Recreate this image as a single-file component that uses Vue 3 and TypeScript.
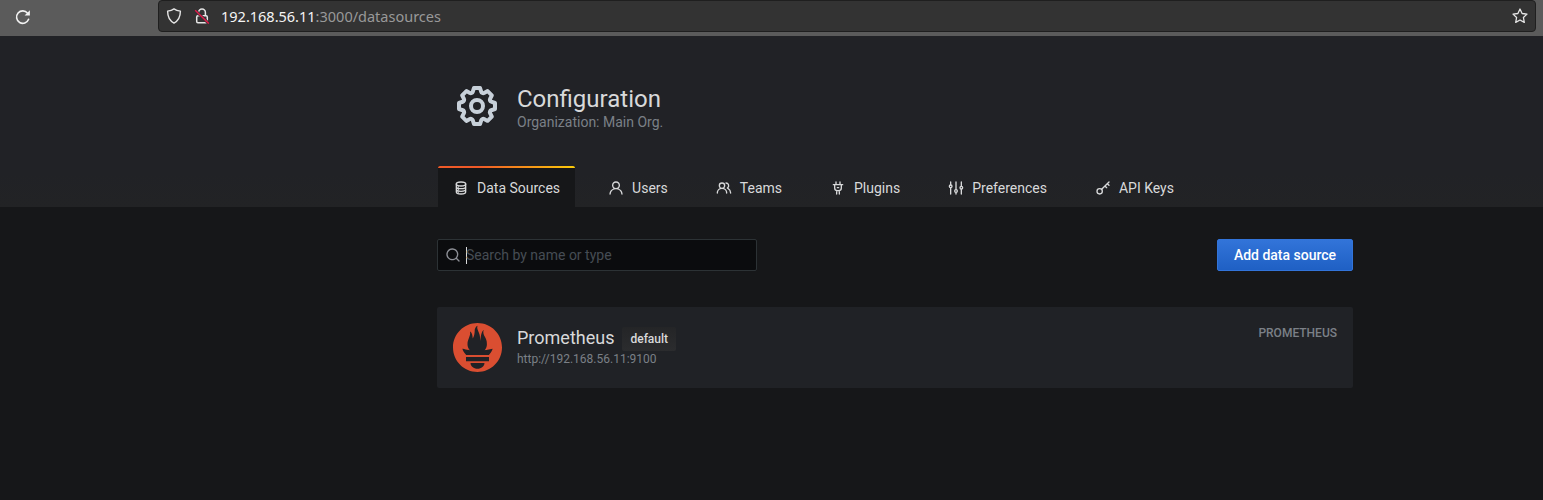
<script setup lang="ts">
interface Tab {
  label: string
  icon: string
  active?: boolean
}

const tabs: Tab[] = [
  { label: 'Data Sources', icon: 'database', active: true },
  { label: 'Users', icon: 'user' },
  { label: 'Teams', icon: 'users' },
  { label: 'Plugins', icon: 'plug' },
  { label: 'Preferences', icon: 'sliders' },
  { label: 'API Keys', icon: 'key' },
]
</script>

<template>
  <div class="window">
    <div class="toolbar">
      <svg class="reload" viewBox="0 0 16 16">
        <path d="M13.6 10.3A6.2 6.2 0 1 1 12.6 4.2" fill="none" stroke="#f2f2f2" stroke-width="1.6" stroke-linecap="round" />
        <path d="M14.9 1.2v5.3H9.6z" fill="#f2f2f2" />
      </svg>
      <div class="urlbar">
        <svg class="shield" viewBox="0 0 16 16">
          <path d="M8 .9C6.2 2.3 4 2.9 1.6 3.1c0 5.6 1.7 9.6 6.4 12 4.700-2.400 6.400-6.400 6.400-12C12 2.900 9.800 2.300 8 .9z" fill="none" stroke="#e6e6e6" stroke-width="1.400" stroke-linejoin="round" />
        </svg>
        <svg class="lock" viewBox="0 0 16 16">
          <path d="M4.600 7.300V4.400a3.400 3.400 0 0 1 6.800 0v2.900" fill="none" stroke="#e6e6e6" stroke-width="1.500" />
          <rect x="2.700" y="7.700" width="10.600" height="7" rx="1.200" fill="none" stroke="#e6e6e6" stroke-width="1.500" />
          <path d="M1.200 2.200 14.800 15.600" stroke="#333" stroke-width="3" />
          <path d="M1.200 2.200 14.800 15.600" stroke="#e31b4b" stroke-width="1.400" />
        </svg>
        <span class="url"><span class="host">192.168.56.11</span>:3000/datasources</span>
        <svg class="star" viewBox="0 0 16 16">
          <path d="M8 1l2.100 4.500 4.900.600-3.600 3.400.900 4.900L8 12l-4.300 2.400.9-4.900L1 6.100l4.900-.6z" fill="none" stroke="#e6e6e6" stroke-width="1.300" stroke-linejoin="round" />
        </svg>
      </div>
    </div>

    <header class="page-header">
      <div class="container">
        <div class="heading">
          <svg class="cog" viewBox="0 0 24 24">
            <path d="M21.320,9.550l-1.890-.630.890-1.780A1,1,0,0,0,20.130,6L18,3.870a1,1,0,0,0-1.150-.190l-1.780.890-.630-1.890A1,1,0,0,0,13.500,2h-3a1,1,0,0,0-.950.680L8.920,4.570,7.140,3.680A1,1,0,0,0,6,3.870L3.870,6a1,1,0,0,0-.190,1.150l.890,1.780-1.890.630A1,1,0,0,0,2,10.500v3a1,1,0,0,0,.680.950l1.890.630-.890,1.780A1,1,0,0,0,3.870,18L6,20.130a1,1,0,0,0,1.150.190l1.780-.890.630,1.890a1,1,0,0,0,.950.680h3a1,1,0,0,0,.950-.680l.630-1.890,1.780.890A1,1,0,0,0,18,20.130L20.130,18a1,1,0,0,0,.190-1.150l-.890-1.780,1.890-.630A1,1,0,0,0,22,13.500v-3A1,1,0,0,0,21.320,9.550ZM20,12.780l-1.200.400A2,2,0,0,0,17.640,16l.570,1.140-1.100,1.100L16,17.640a2,2,0,0,0-2.790,1.160l-.400,1.200H11.220l-.400-1.200A2,2,0,0,0,8,17.640l-1.140.570-1.100-1.100L6.360,16A2,2,0,0,0,5.200,13.180L4,12.780V11.220l1.200-.400A2,2,0,0,0,6.360,8L5.790,6.890l1.100-1.100L8,6.360A2,2,0,0,0,10.820,5.200l.400-1.200h1.560l.400,1.200A2,2,0,0,0,16,6.360l1.140-.570,1.100,1.100L17.640,8a2,2,0,0,0,1.160,2.790l1.200.400ZM12,8a4,4,0,1,0,4,4A4,4,0,0,0,12,8Zm0,6a2,2,0,1,1,2-2A2,2,0,0,1,12,14Z" />
          </svg>
          <div>
            <h1>Configuration</h1>
            <div class="subtitle">Organization: Main Org.</div>
          </div>
        </div>
        <nav class="tabs">
          <a v-for="tab in tabs" :key="tab.label" class="tab" :class="{ active: tab.active }">
            <svg class="tab-icon" viewBox="0 0 24 24">
              <g v-if="tab.icon === 'database'" class="line">
                <ellipse cx="12" cy="6" rx="7" ry="3" />
                <path d="M5 6v12c0 1.700 3.100 3 7 3s7-1.300 7-3V6M5 10c0 1.700 3.100 3 7 3s7-1.300 7-3M5 14c0 1.700 3.100 3 7 3s7-1.300 7-3" />
                <path d="M8 10.500v.1M8 14.500v.1M8 18.200v.1" />
              </g>
              <path v-else-if="tab.icon === 'user'" d="M15.710,12.710a6,6,0,1,0-7.420,0,10,10,0,0,0-6.220,8.180,1,1,0,0,0,2,.220,8,8,0,0,1,15.900,0,1,1,0,0,0,1,.890h.110a1,1,0,0,0,.880-1.100A10,10,0,0,0,15.710,12.710ZM12,12a4,4,0,1,1,4-4A4,4,0,0,1,12,12Z" />
              <path v-else-if="tab.icon === 'users'" d="M12.300,12.220A4.920,4.920,0,0,0,14,8.500a5,5,0,0,0-10,0,4.920,4.920,0,0,0,1.700,3.720A8,8,0,0,0,1,19.500a1,1,0,0,0,2,0,6,6,0,0,1,12,0,1,1,0,0,0,2,0A8,8,0,0,0,12.300,12.220ZM9,11.500a3,3,0,1,1,3-3A3,3,0,0,1,9,11.500Zm9.740.320A5,5,0,0,0,15,3.500a1,1,0,0,0,0,2,3,3,0,0,1,3,3,3,3,0,0,1-1.500,2.590,1,1,0,0,0-.500.840,1,1,0,0,0,.450.860l.390.260.130.070a7,7,0,0,1,4,6.380,1,1,0,0,0,2,0A9,9,0,0,0,18.740,11.820Z" />
              <g v-else-if="tab.icon === 'plug'" class="line">
                <path d="M5 7h14M7 7v5a4 4 0 0 0 4 4h2a4 4 0 0 0 4-4V7M9 3v4M15 3v4M10 16v5M14 16v5M11 11.500h2" />
              </g>
              <g v-else-if="tab.icon === 'sliders'" class="line">
                <path d="M4 3v4M4 12v9M12 3v11M12 19v2M20 3v6M20 14v7" />
                <circle cx="4" cy="9.500" r="2" />
                <circle cx="12" cy="16.500" r="2" />
                <circle cx="20" cy="11.500" r="2" />
              </g>
              <g v-else class="line">
                <circle cx="7" cy="17" r="4" />
                <path d="M10 14 21 3M15 9l2.500 2.500M18.500 5.500 21 8" />
              </g>
            </svg>
            <span>{{ tab.label }}</span>
          </a>
        </nav>
      </div>
    </header>

    <main class="container">
      <div class="actions">
        <div class="search">
          <svg class="search-icon" viewBox="0 0 24 24">
            <path d="M21.710,20.290,18,16.610A9,9,0,1,0,16.610,18l3.680,3.680a1,1,0,0,0,1.420,0A1,1,0,0,0,21.710,20.290ZM11,18a7,7,0,1,1,7-7A7,7,0,0,1,11,18Z" />
          </svg>
          <span class="caret"></span>
          <span>Search by name or type</span>
        </div>
        <button class="add">Add data source</button>
      </div>

      <section class="card">
        <svg class="logo" viewBox="0 .667 113.333 113.333">
          <path d="M56.667.667C25.372.667 0 26.036 0 57.332c0 31.295 25.372 56.666 56.667 56.666 31.295 0 56.666-25.371 56.666-56.666C113.333 26.036 87.961.667 56.667.667zm0 106.055c-8.904 0-16.123-5.948-16.123-13.283H72.790c0 7.334-7.219 13.283-16.123 13.283zM83.297 89.040H30.034v-9.658h53.263zM83.106 74.411H30.186c-.176-.203-.356-.403-.526-.609-5.452-6.620-6.736-10.076-7.983-13.598-.021-.116 6.611 1.355 11.314 2.413 0 0 2.420.560 5.958 1.205-3.397-3.982-5.414-9.044-5.414-14.218 0-11.359 8.712-21.285 5.569-29.308 3.059.249 6.331 6.456 6.552 16.161 3.252-4.494 4.613-12.701 4.613-17.733 0-5.210 3.433-11.262 6.867-11.469-3.061 5.045.793 9.370 4.219 20.099 1.285 4.030 1.121 10.812 2.113 15.113C63.797 33.534 65.333 20.500 71 16c-2.500 5.667.370 12.758 2.333 16.167 3.167 5.500 5.087 9.667 5.087 17.548 0 5.284-1.951 10.259-5.242 14.148 3.742-.702 6.326-1.335 6.326-1.335l12.152-2.371s-1.765 7.261-8.550 14.254z" />
        </svg>
        <div class="info">
          <div class="name-row">
            <span class="name">Prometheus</span>
            <span class="badge">default</span>
          </div>
          <div class="address">http://192.168.56.11:9100</div>
        </div>
        <div class="type">PROMETHEUS</div>
      </section>
    </main>
  </div>
</template>

<style>
body {
  background: #161719;
}
</style>

<style scoped>
.window {
  height: 500px;
  overflow: hidden;
  background: #161719;
  color: #d8d9da;
  font-family: Roboto, "Liberation Sans", sans-serif;
  font-size: 14px;
}
svg {
  display: block;
  flex: none;
}
.toolbar {
  display: flex;
  height: 36px;
  background: #5b5b5b;
}
.reload {
  width: 16px;
  height: 16px;
  margin: 9px 0 0 15px;
}
.urlbar {
  box-sizing: border-box;
  display: flex;
  align-items: center;
  width: 1378px;
  height: 32px;
  margin-left: 127px;
  padding: 0 7px;
  border: 1px solid #1f1f1f;
  border-radius: 4px;
  background: #333;
}
.shield,
.lock,
.star {
  width: 16px;
  height: 16px;
}
.lock {
  margin-left: 12px;
}
.url {
  margin-left: 11px;
  color: #999;
  font-family: "Noto Sans", sans-serif;
  font-size: 14.500px;
}
.host {
  color: #f5f5f5;
}
.star {
  margin-left: auto;
}
.page-header {
  height: 171px;
  background: linear-gradient(#212226, #212226 80%, #222325);
}
.container {
  width: 916px;
  margin-left: 437px;
}
.heading {
  display: flex;
  height: 130px;
  box-sizing: border-box;
  padding: 46px 0 0 16px;
}
.cog {
  width: 48px;
  height: 48px;
  margin-right: 16px;
  fill: #c7d0d9;
}
h1 {
  margin: 2px 0 0;
  font-size: 24px;
  font-weight: 400;
  line-height: 30px;
}
.subtitle {
  color: #7b8087;
  line-height: 16px;
}
.tabs {
  display: flex;
  height: 41px;
  margin-left: 1px;
}
.tab {
  position: relative;
  box-sizing: border-box;
  display: flex;
  align-items: center;
  height: 41px;
  padding: 2px 15px 0;
  margin-right: 18px;
}
.tab.active {
  background: #161719;
}
.tab.active::before {
  content: "";
  position: absolute;
  top: 0;
  left: 0;
  right: 0;
  height: 2px;
  border-radius: 2px 2px 0 0;
  background: linear-gradient(to right, #f05a28 30%, #fbca0a 99%);
}
.tab-icon {
  width: 16px;
  height: 16px;
  margin-right: 8px;
  fill: #d8d9da;
}
.line {
  fill: none;
  stroke: #d8d9da;
  stroke-width: 2;
  stroke-linecap: round;
  stroke-linejoin: round;
}
.actions {
  display: flex;
  justify-content: space-between;
  padding-top: 32px;
}
.search {
  box-sizing: border-box;
  display: flex;
  align-items: center;
  width: 320px;
  height: 32px;
  padding-left: 7px;
  border: 1px solid #2c3235;
  border-radius: 2px;
  background: #0b0c0e;
  color: #464c54;
}
.search-icon {
  width: 16px;
  height: 16px;
  margin-right: 5px;
  fill: #8e9097;
}
.caret {
  width: 1px;
  height: 17px;
  margin-right: -1px;
  background: #d8d9da;
}
.add {
  width: 136px;
  height: 32px;
  padding: 0;
  border: 1px solid #3274d9;
  border-radius: 2px;
  background: linear-gradient(#3274d9, #1f60c4);
  color: #fff;
  font: 500 14px Roboto, sans-serif;
}
.card {
  box-sizing: border-box;
  display: flex;
  height: 81px;
  margin-top: 36px;
  padding: 16px;
  border-radius: 2px;
  background: #202226;
}
.logo {
  width: 49px;
  height: 49px;
  margin-right: 15px;
  fill: #da4e31;
}
.name-row {
  display: flex;
  align-items: center;
  height: 28px;
}
.name {
  font-size: 18px;
}
.badge {
  height: 24px;
  margin: 3px 0 0 8px;
  padding: 0 8px;
  border-radius: 2px;
  background: linear-gradient(#242527, #2b2c2e);
  font-size: 12px;
  font-weight: 500;
  line-height: 25px;
}
.address {
  color: #7b8087;
  font-size: 12px;
  line-height: 16px;
}
.type {
  margin-left: auto;
  color: #7b8087;
  font-size: 12px;
  font-weight: 500;
  line-height: 20px;
}
</style>
